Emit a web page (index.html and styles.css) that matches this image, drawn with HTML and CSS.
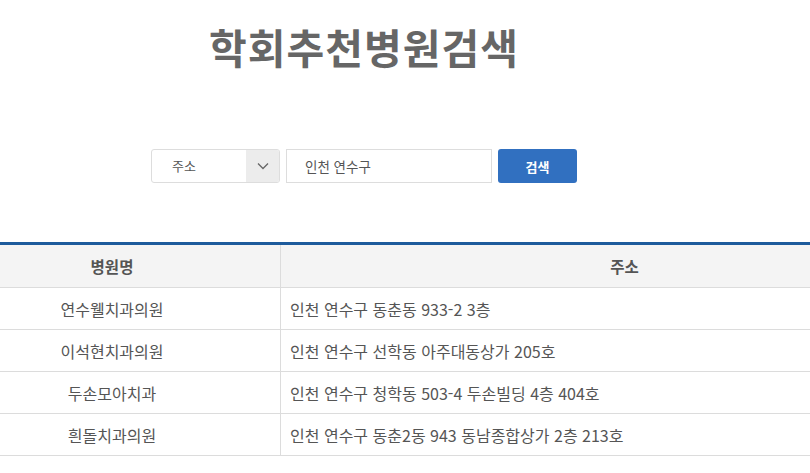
FILE: index.html
```html
<!DOCTYPE html>
<html lang="ko">
<head>
<meta charset="utf-8">
<title>학회추천병원검색</title>
<link rel="stylesheet" href="styles.css">
</head>
<body>
<div class="page">
  <div class="top">
    <h1 class="title">학회추천병원검색</h1>
    <form class="search">
      <div class="select">
        <span class="select-label">주소</span>
        <span class="select-arrow">
          <svg width="12" height="8" viewBox="0 0 12 8"><path d="M1 1.5 L6 6.5 L11 1.5" fill="none" stroke="#666" stroke-width="1.3"/></svg>
        </span>
      </div>
      <div class="input">인천 연수구</div>
      <button type="button" class="btn">검색</button>
    </form>
  </div>
  <div class="list-wrap">
    <table class="list">
      <thead>
        <tr><th class="c-name">병원명</th><th class="c-addr">주소</th></tr>
      </thead>
      <tbody>
        <tr><td class="c-name">연수웰치과의원</td><td class="c-addr">인천 연수구 동춘동 933-2 3층</td></tr>
        <tr><td class="c-name">이석현치과의원</td><td class="c-addr">인천 연수구 선학동 아주대동상가 205호</td></tr>
        <tr><td class="c-name">두손모아치과</td><td class="c-addr">인천 연수구 청학동 503-4 두손빌딩 4층 404호</td></tr>
        <tr><td class="c-name">흰돌치과의원</td><td class="c-addr">인천 연수구 동춘2동 943 동남종합상가 2층 213호</td></tr>
      </tbody>
    </table>
  </div>
</div>
</body>
</html>
```

FILE: styles.css
```css
html, body {
  margin: 0;
  padding: 0;
  background: #fff;
  overflow: hidden;
}
body {
  font-family: "Noto Sans CJK KR", "Noto Sans", sans-serif;
  color: #555;
}
.page {
  width: 810px;
  overflow: hidden;
}
.top {
  width: 728px;
  display: flex;
  flex-direction: column;
  align-items: center;
}
.title {
  margin: 22px 0 0;
  font-size: 41px;
  line-height: 48px;
  font-weight: 700;
  color: #666;
  letter-spacing: 1px;
}
.search {
  margin: 79px 0 0;
  display: flex;
  gap: 6px;
  height: 34px;
}
.select {
  width: 129px;
  box-sizing: border-box;
  border: 1px solid #ddd;
  border-radius: 3px;
  display: flex;
  overflow: hidden;
}
.select-label {
  flex: 1;
  padding-left: 20px;
  font-size: 13px;
  line-height: 32px;
  color: #555;
}
.select-arrow {
  width: 33px;
  background: #ececec;
  display: flex;
  align-items: center;
  justify-content: center;
}
.input {
  width: 206px;
  box-sizing: border-box;
  border: 1px solid #ddd;
  padding-left: 18px;
  font-size: 13.5px;
  line-height: 32px;
  color: #555;
}
.btn {
  width: 79px;
  border: 0;
  border-radius: 3px;
  background: #3170c0;
  color: #fff;
  font-family: inherit;
  font-size: 13px;
  font-weight: 700;
  padding: 0;
}
.list-wrap {
  width: 810px;
  overflow: hidden;
  margin-top: 59px;
}
.list {
  margin-left: -56px;
  width: 1024px;
  border-collapse: collapse;
  border-top: 3px solid #1d5b9c;
  table-layout: fixed;
}
.list th, .list td {
  border-bottom: 1px solid #dcdcdc;
  font-size: 16px;
  color: #555;
  padding: 0;
}
.list th {
  background: #f4f4f4;
  height: 42px;
  font-weight: 700;
  font-size: 15.5px;
  text-align: center;
}
.list td {
  height: 41px;
}
.c-name {
  width: 336px;
  border-right: 1px solid #dcdcdc;
  text-align: center;
}
.list td.c-addr {
  text-align: left;
  padding-left: 9px;
}
```
